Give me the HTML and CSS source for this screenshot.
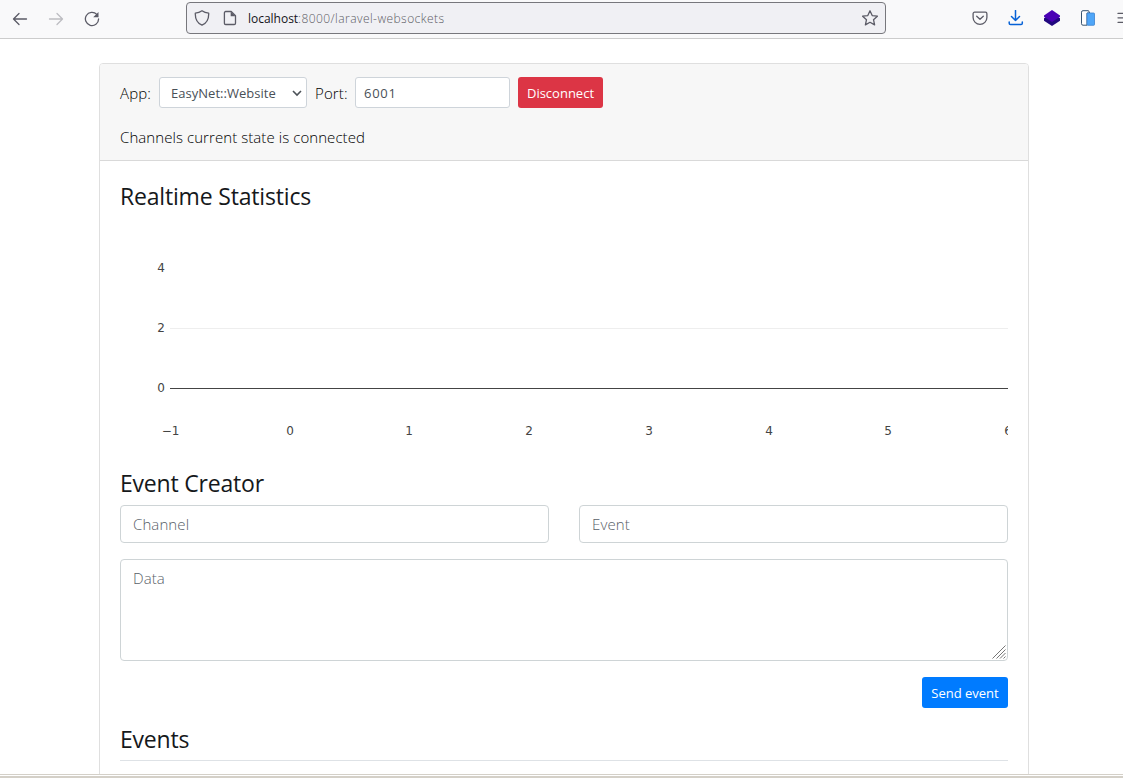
FILE: index.html
```html
<!DOCTYPE html>
<html lang="en">
<head>
<meta charset="utf-8">
<title>WebSockets Dashboard</title>
<link rel="stylesheet" href="styles.css">
</head>
<body>
<div class="window">
  <header class="toolbar">
    <nav class="nav-buttons">
      <svg class="icon" viewBox="0 0 16 16"><path d="M14.500 8H1.500M7 2.500L1.500 8 7 13.500"/></svg>
      <svg class="icon icon-disabled" viewBox="0 0 16 16"><path d="M1.500 8h13M9 2.500L14.500 8 9 13.500"/></svg>
      <svg class="icon" viewBox="0 0 16 16"><path d="M12.800 3.400A6.600 6.600 0 1 0 14.600 8"/><path class="solid" d="M14.500 1v5.300H9.200z"/></svg>
    </nav>
    <div class="urlbar">
      <svg class="icon" viewBox="0 0 16 16"><path d="M8 .8C6.400 2 4 3 1.300 3.200 1.100 8.500 2.500 12.800 8 15.200 13.500 12.800 14.900 8.500 14.700 3.200 12 3 9.600 2 8 .8z"/></svg>
      <svg class="icon icon-page" viewBox="0 0 16 16"><path d="M3.700 1.500h5.500l4.300 4.300v7.400a1.300 1.300 0 0 1-1.300 1.300H3.700a1.300 1.300 0 0 1-1.300-1.300V2.800a1.300 1.300 0 0 1 1.300-1.300z"/><path class="solid" d="M8.700 1.500v4.800h4.800z"/></svg>
      <span class="url"><span class="host">localhost</span><span class="path">:8000/laravel-websockets</span></span>
      <svg class="icon" viewBox="0 0 16 16"><path d="M8 .8l2.200 4.800 5.200.6-3.900 3.500 1.100 5.200L8 12.300l-4.600 2.600 1.100-5.200L.6 6.200l5.200-.6z"/></svg>
    </div>
    <div class="extensions">
      <svg class="icon" viewBox="0 0 16 16"><path d="M2.600 2.200h10.800a1.500 1.500 0 0 1 1.500 1.500V7.500a6.900 6.900 0 0 1-13.800 0V3.700a1.500 1.500 0 0 1 1.500-1.500zM4.700 6.200L8 9.300l3.300-3.100"/></svg>
      <svg class="icon icon-download" viewBox="0 0 16 16"><path d="M7.500 .5v10M3.500 6.500l4 4 4-4M1.200 12v1.200c0 .9.500 1.300 1.300 1.300h10.500c.8 0 1.300-.4 1.300-1.300V12"/></svg>
      <svg class="icon-flat" viewBox="0 0 16 16"><path fill="#21087f" d="M0 8.300L8 3l8 5.300v2.500L8 16l-8-5.200z"/><path fill="#4a00b4" d="M8 0l8 5.500v1.200L8 12 0 6.700V5.500z"/></svg>
      <svg class="icon-flat" viewBox="0 0 16 16"><path fill="#fff" stroke="#385470" d="M3 .7h5.500l1.200 2.300H7v12.200H3a1.500 1.500 0 0 1-1.500-1.500V2.200A1.500 1.500 0 0 1 3 .7z"/><rect x="7" y="3" width="7.500" height="12.300" rx=".8" fill="#4fa6f8" stroke="#3c83cf" stroke-width=".8"/></svg>
      <svg class="icon" viewBox="0 0 16 16"><path d="M2 3.400h14M2 7.800h14M2 12.300h14"/></svg>
    </div>
  </header>
  <main class="page">
    <section class="card">
      <div class="card-header">
        <form class="connect">
          <label class="label-app">App:</label>
          <div class="control select"><span>EasyNet::Website</span><svg class="chevron" viewBox="0 0 10 7"><path d="M1 1l4 4 4-4"/></svg></div>
          <label class="label-port">Port:</label>
          <div class="control port">6001</div>
          <button type="button" class="btn btn-danger">Disconnect</button>
        </form>
        <p class="state">Channels current state is connected</p>
      </div>
      <div class="card-body">
        <h4 class="title title-stats">Realtime Statistics</h4>
        <svg class="chart" width="888" height="250" viewBox="0 0 888 250">
          <path class="gridline" d="M50 112.500H888"/>
          <path class="zeroline" d="M50 172.500H888"/>
          <g class="ticks ticks-y"><text x="45" y="56">4</text><text x="45" y="116">2</text><text x="45" y="176">0</text></g>
          <g class="ticks ticks-x"><text x="50.500" y="219">−1</text><text x="170" y="219">0</text><text x="289" y="219">1</text><text x="409" y="219">2</text><text x="529" y="219">3</text><text x="649" y="219">4</text><text x="768" y="219">5</text><text x="888" y="219">6</text></g>
        </svg>
        <h4 class="title title-creator">Event Creator</h4>
        <div class="row">
          <div class="field">Channel</div>
          <div class="field">Event</div>
        </div>
        <div class="field area"><span>Data</span><svg class="grip" viewBox="0 0 14 14"><path d="M.5 13.500l13-13M4.500 13.500l9-9M8 13.500L13.500 8M11.500 13.500l2-2"/></svg></div>
        <div class="actions"><button type="button" class="btn btn-primary">Send event</button></div>
        <h4 class="title title-events">Events</h4>
        <div class="rule"></div>
      </div>
    </section>
  </main>
  <footer class="frame-edge"></footer>
</div>
</body>
</html>
```
FILE: styles.css
```css
* { box-sizing: border-box; }
body { margin: 0; font-family: "Open Sans", "Noto Sans", sans-serif; font-size: 14px; color: #15181b; background: #fff; }
.window { height: 778px; display: flex; flex-direction: column; overflow: hidden; }
.toolbar { height: 39px; flex: none; display: flex; align-items: flex-start; background: #f9f9fa; border-bottom: 1px solid #ccc; overflow: hidden; }
.nav-buttons { width: 186px; padding: 11px 0 0 12px; display: flex; gap: 20px; flex: none; }
.icon { width: 16px; height: 16px; flex: none; fill: none; stroke: #5b5b66; stroke-width: 1.3; stroke-linejoin: round; stroke-linecap: round; }
.icon .solid { fill: #5b5b66; stroke: none; }
.icon-disabled { stroke: #bdbdc1; }
.icon-download { stroke: #0561d6; stroke-width: 1.5; }
.icon-flat { width: 16px; height: 16px; flex: none; }
.urlbar { width: 700px; height: 32px; margin-top: 2px; flex: none; display: flex; align-items: center; padding: 0 7px; background: #f0f0f4; border: 1px solid #77777c; border-radius: 4px; }
.icon-page { margin-left: 12px; }
.url { flex: 1; margin-left: 10px; font-size: 12px; white-space: nowrap; font-weight: 300; }
.host { color: #15141a; font-weight: 400; letter-spacing: -.02px; }
.path { color: #5c5c64; letter-spacing: .44px; }
.extensions { display: flex; gap: 20px; padding: 10px 0 0 86px; }
.page { flex: 1; min-height: 0; overflow: hidden; padding: 24px 94px 0 99px; }
.card { height: 760px; border: 1px solid #dfdfdf; border-radius: 4px; }
.card-header { height: 97px; background: #f7f7f7; border-bottom: 1px solid #d9d9d9; padding: 13px 20px 0; border-radius: 3px 3px 0 0; }
.connect { display: flex; align-items: center; height: 31px; font-size: 15px; font-weight: 300; letter-spacing: .15px; color: #000; }
.label-app { width: 39px; }
.label-port { width: 40px; margin-left: 8px; }
.control { height: 31px; display: flex; align-items: center; background: #fff; border: 1px solid #ced4da; border-radius: 3px; font-size: 13px; color: #495057; font-weight: 400; }
.select { width: 148px; padding: 0 4px 0 11px; justify-content: space-between; letter-spacing: .03px; }
.chevron { width: 10px; height: 7px; margin-top: 1px; fill: none; stroke: #4c5258; stroke-width: 1.6; }
.port { width: 155px; padding: 0 8px; letter-spacing: .7px; }
.btn { height: 31px; border: 0; border-radius: 3px; padding: 0; font: 400 13px "Open Sans", sans-serif; color: #fff; }
.btn-danger { width: 85px; margin-left: 8px; background: #dc3545; }
.btn-primary { width: 86px; background: #007bff; }
.state { margin: 17px 0 0; line-height: 24px; font-size: 15px; font-weight: 300; letter-spacing: .07px; color: #000; }
.card-body { padding: 20px 20px 0; }
.title { margin: 0; font-size: 23px; font-weight: 400; line-height: 29px; letter-spacing: -.2px; }
.title-stats { padding-top: 1px; letter-spacing: -.18px; }
.chart { display: block; margin-top: 5px; height: 250px; overflow: hidden; }
.gridline { stroke: #eee; }
.zeroline { stroke: #444; }
.ticks { font: 12px "DejaVu Sans", sans-serif; fill: #444; }
.ticks-y { text-anchor: end; }
.ticks-x { text-anchor: middle; }
.title-creator { margin-top: 3px; height: 36px; }
.row { display: grid; grid-template-columns: 1fr 1fr; gap: 30px; }
.field { height: 38px; border: 1px solid #ced4d6; border-radius: 4px; padding: 6px 12px; font-size: 15px; line-height: 24px; font-weight: 300; letter-spacing: .1px; color: #586068; }
.area { height: 102px; margin-top: 16px; display: flex; justify-content: space-between; padding-right: 1px; padding-bottom: 1px; }
.grip { width: 14px; height: 14px; align-self: flex-end; fill: none; stroke: #777; stroke-width: 1; }
.actions { margin-top: 16px; display: flex; justify-content: flex-end; }
.title-events { margin-top: 17px; }
.rule { margin-top: 6px; border-top: 1px solid #dee2e6; }
.frame-edge { flex: none; height: 4px; border-top: 1px solid #d4d0c8; border-bottom: 2px solid #d4d0c8; background: #fff; }
```
